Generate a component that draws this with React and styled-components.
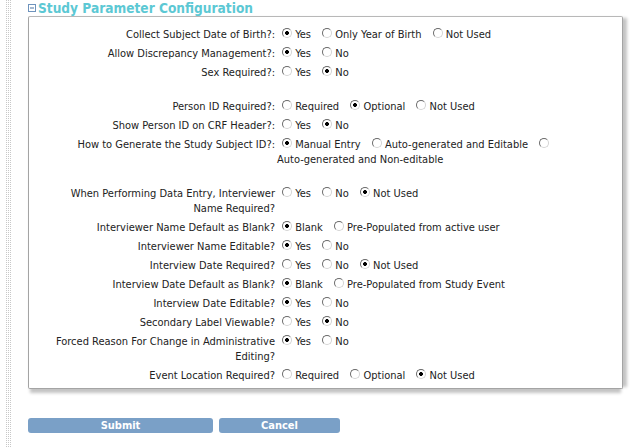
import React from "react";
import styled, { createGlobalStyle } from "styled-components";

const GlobalStyle = createGlobalStyle`
  body {
    margin: 0;
    background: #fff;
    font-family: "DejaVu Sans", "Liberation Sans", sans-serif;
    font-stretch: condensed;
    font-size: 11px;
    color: #222;
  }
`;

const params = [
  { label: "Collect Subject Date of Birth?:", options: ["Yes", "Only Year of Birth", "Not Used"], checked: 0 },
  { label: "Allow Discrepancy Management?:", options: ["Yes", "No"], checked: 0 },
  { label: "Sex Required?:", options: ["Yes", "No"], checked: 1 },
  { spacer: true },
  { label: "Person ID Required?:", options: ["Required", "Optional", "Not Used"], checked: 1 },
  { label: "Show Person ID on CRF Header?:", options: ["Yes", "No"], checked: 1 },
  {
    label: "How to Generate the Study Subject ID?:",
    options: ["Manual Entry", "Auto-generated and Editable", "Auto-generated and Non-editable"],
    checked: 0,
  },
  { spacer: true },
  { label: "When Performing Data Entry, Interviewer Name Required?", options: ["Yes", "No", "Not Used"], checked: 2 },
  { label: "Interviewer Name Default as Blank?", options: ["Blank", "Pre-Populated from active user"], checked: 0 },
  { label: "Interviewer Name Editable?", options: ["Yes", "No"], checked: 0 },
  { label: "Interview Date Required?", options: ["Yes", "No", "Not Used"], checked: 2 },
  { label: "Interview Date Default as Blank?", options: ["Blank", "Pre-Populated from Study Event"], checked: 0 },
  { label: "Interview Date Editable?", options: ["Yes", "No"], checked: 0 },
  { label: "Secondary Label Viewable?", options: ["Yes", "No"], checked: 1 },
  { label: "Forced Reason For Change in Administrative Editing?", options: ["Yes", "No"], checked: 0 },
  { label: "Event Location Required?", options: ["Required", "Optional", "Not Used"], checked: 2 },
];

export default function App() {
  return (
    <Page>
      <GlobalStyle />
      <DottedRail />
      <Main>
        <Title>
          <Collapse>
            <svg width="8" height="8" viewBox="0 0 8 8">
              <rect x="0.5" y="0.5" width="7" height="7" fill="#fff" stroke="#6e93bd" />
              <rect x="2" y="3.5" width="4" height="1" fill="#4d74a3" />
            </svg>
          </Collapse>
          Study Parameter Configuration
        </Title>
        <Panel>
          <Form>
            {params.map((p, i) =>
              p.spacer ? (
                <Spacer key={i} />
              ) : (
                <React.Fragment key={i}>
                  <Label>{p.label}</Label>
                  <Options>
                    {p.options.map((o, j) => (
                      <React.Fragment key={j}>
                        <Radio type="radio" name={"p" + i} defaultChecked={j === p.checked} />{" "}
                        <OptionText>{o}</OptionText>{" "}
                      </React.Fragment>
                    ))}
                  </Options>
                </React.Fragment>
              )
            )}
          </Form>
        </Panel>
        <Buttons>
          <Button $w={185}>Submit</Button>
          <Button $w={121}>Cancel</Button>
        </Buttons>
      </Main>
    </Page>
  );
}

const Page = styled.div`
  display: flex;
  min-height: 447px;
`;

const DottedRail = styled.div`
  width: 6px;
  margin-left: 6px;
  flex-shrink: 0;
  background-image: radial-gradient(circle at 0.5px 0.5px, #c8c8c8 0.6px, transparent 0.7px);
  background-size: 2px 2px;
`;

const Main = styled.div`
  padding-left: 16px;
  width: 601px;
`;

const Title = styled.div`
  display: flex;
  align-items: center;
  height: 17px;
  margin-top: -1px;
  font-family: "DejaVu Sans", sans-serif;
  font-stretch: condensed;
  font-weight: bold;
  font-size: 13.6px;
  color: #5cc8d4;
`;

const Collapse = styled.span`
  display: inline-flex;
  margin-right: 2px;
  margin-top: 1px;
`;

const Panel = styled.div`
  box-sizing: border-box;
  width: 595px;
  border: 1px solid #a4a4a4;
  border-top-color: #b8b8b8;
  border-radius: 2px;
  padding: 8px 0 3px 20px;
  box-shadow: 6px 0 3px -2px #c4c4c4, 0 6px 3px -2px #c4c4c4;
`;

const Form = styled.div`
  display: grid;
  grid-template-columns: 226px 1fr;
  column-gap: 2px;
  line-height: 15px;
`;

const Label = styled.div`
  text-align: right;
  padding: 2px 0;
`;

const Options = styled.div`
  padding: 2px 4px 2px 0;
`;

const OptionText = styled.span`
  white-space: nowrap;
  margin-right: 3px;
`;

const Spacer = styled.div`
  grid-column: 1 / -1;
  height: 15px;
`;

const Radio = styled.input`
  appearance: none;
  box-sizing: border-box;
  width: 10px;
  height: 10px;
  margin: 1px 0 0 5px;
  vertical-align: top;
  border: 1px solid;
  border-color: #6a6a6a #d4d4d4 #d4d4d4 #6a6a6a;
  border-radius: 50%;
  background: #fff;
  &:checked {
    background: radial-gradient(circle, #000 0 1.7px, #fff 2.2px);
  }
`;

const Buttons = styled.div`
  display: flex;
  gap: 6px;
  margin-top: 29px;
`;

const Button = styled.button`
  width: ${(p) => p.$w}px;
  height: 15px;
  padding: 0;
  border: none;
  border-radius: 3px;
  background: #7aa0c7;
  color: #fff;
  font-family: "DejaVu Sans", sans-serif;
  font-stretch: condensed;
  font-weight: bold;
  font-size: 11px;
  line-height: 15px;
`;
